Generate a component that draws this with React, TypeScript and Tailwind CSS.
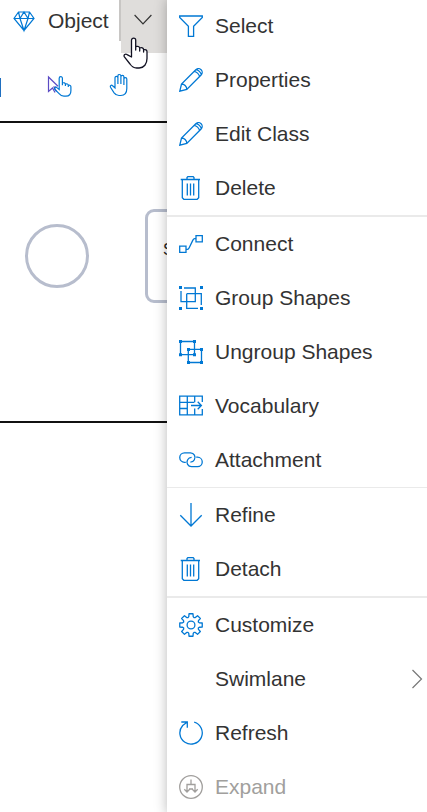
import type { ReactNode } from "react";

type Item = { label: string; icon?: ReactNode; submenu?: boolean; disabled?: boolean };

function Icon({ children, className = "h-6 w-6" }: { children: ReactNode; className?: string }) {
  return (
    <svg viewBox="0 0 24 24" className={`shrink-0 ${className}`} fill="none" stroke="currentColor" strokeWidth="1.3" aria-hidden="true">
      {children}
    </svg>
  );
}

const pencil = (
  <Icon>
    <path d="M.8 23.2 2.5 16 16.8 1.7a3.6 3.6 0 0 1 5.3 5.3L7.8 21.4z M2.5 16c2.700 0 5.300 2.200 5.300 5.400 M15.200 3.300c2.200.3 5 2.800 5.400 5.400 M17.200 1.500c2 .4 4.700 2.900 5.100 5" />
  </Icon>
);

const trash = (
  <Icon>
    <path d="M1.700 3.500h19.300M8 3.500v-2l.8-.8h5.400l.8.8v2M3.300 3.500v18.300l1.500 1.500h13.400l1.500-1.500V3.500M8.300 7.500v12M11.500 7.500v12M14.700 7.500v12" />
  </Icon>
);

const gearPoints = Array.from({ length: 8 }, (_, i) => {
  const at = (deg: number, r: number) => {
    const a = ((i * 45 + deg) * Math.PI) / 180;
    return `${(12 + r * Math.cos(a)).toFixed(2)},${(12 + r * Math.sin(a)).toFixed(2)}`;
  };
  return [at(-15, 8.6), at(-10, 11.4), at(10, 11.4), at(15, 8.6), at(22.5, 7.9)].join(" ");
}).join(" ");

const groups: { rule: string; items: Item[] }[] = [
  {
    rule: "",
    items: [
      { label: "Select", icon: <Icon><path d="M.7 2h22.600v1.400L14.600 12.200v10.100H9.400V12.200L.7 3.400z" /></Icon> },
      { label: "Properties", icon: pencil },
      { label: "Edit Class", icon: pencil },
      { label: "Delete", icon: trash },
    ],
  },
  {
    rule: "border-t-2",
    items: [
      {
        label: "Connect",
        icon: <Icon><path d="M.7 14.200h6.300v6.200H.7zM17 3.700h6.300v6.200H17zM7 17.300h1.500c1 0 1.300-.6 1.700-1.500L14 7.900c.4-.9.800-1.300 1.700-1.300H17" /></Icon>,
      },
      {
        label: "Group Shapes",
        icon: (
          <Icon>
            <path d="M5 2h11.300v13.600H2V5M7.700 7.700h14.600V19M19 22.300H7.700V7.700" />
            <path fill="currentColor" stroke="none" d="M0 0h3v3H0zM21 0h3v3h-3zM0 21h3v3H0zM21 21h3v3h-3z" />
          </Icon>
        ),
      },
      {
        label: "Ungroup Shapes",
        icon: (
          <Icon>
            <path d="M1.500 1.500h14v13.200h-14zM9.300 9.300h13.200v13.200H9.300z" />
            <path fill="currentColor" stroke="none" d="M0 0h3v3H0zM14 0h3v3h-3zM0 13.300h3v3H0zM14 13.300h3v3h-3zM8 8h3v3H8zM21 8h3v3h-3zM8 21h3v3H8zM21 21h3v3h-3z" />
          </Icon>
        ),
      },
      {
        label: "Vocabulary",
        icon: <Icon><path d="M23.300 8V2.200H.7v18.600h22.600V15M8.300 2.200v18.600M.7 8.300h14.600M.7 14.500h7.600M15.700 2.200v6.100M15.700 14.500v6.300M12 11.500h10.300M18.700 7.800l3.700 3.700-3.700 3.700" /></Icon>,
      },
      {
        label: "Attachment",
        icon: (
          <Icon>
            <path d="M6.800 14.300H5.500a4.700 4.700 0 0 1 0-9.500h6a4.600 4.600 0 0 1 3.900 6.900c-.8 1.500-2.300 2.500-4 2.500" />
            <path d="M17.200 9.200h1.300a4.700 4.700 0 0 1 0 9.500h-6a4.600 4.600 0 0 1-3.900-6.900c.8-1.500 2.300-2.500 4-2.500" />
          </Icon>
        ),
      },
    ],
  },
  {
    rule: "border-t",
    items: [
      { label: "Refine", icon: <Icon><path d="M12 0v23M1.300 12.300 12 23l10.700-10.700" /></Icon> },
      { label: "Detach", icon: trash },
    ],
  },
  {
    rule: "border-t-2",
    items: [
      { label: "Customize", icon: <Icon><polygon points={gearPoints} strokeLinejoin="round" /><circle cx="12" cy="12" r="3.900" /></Icon> },
      { label: "Swimlane", submenu: true },
      { label: "Refresh", icon: <Icon><path d="M15.200 1.200A11.200 11.200 0 1 1 3.700 4.500L8.300 1M2.300 1h6v5.700" /></Icon> },
      {
        label: "Expand",
        disabled: true,
        icon: <Icon><circle cx="12" cy="12" r="11.300" /><path d="M12 4.500V9.500M8 17V9.500h8V17M5.300 14.300 8 17l2.700-2.700M13.300 14.300 16 17l2.700-2.700M10 14h4" /></Icon>,
      },
    ],
  },
];

const handPath =
  "M8.500 20V3.200a2.100 2.100 0 0 1 4.200 0V13V9.700c2-.8 3.800-.2 4 1.500V14v-3c2-.8 3.700 0 3.900 1.600V15v-2.200c1.900-.7 3.400.2 3.400 2v6.700c0 5.400-3 9.500-7.800 9.500h-2.500c-3.200 0-5-1.500-6.700-4L1.400 19.800c-1.100-1.800 1-3.600 2.700-2.200z";

function MenuRow({ item }: { item: Item }) {
  return (
    <li role="none">
      <button
        type="button"
        role="menuitem"
        disabled={item.disabled}
        aria-haspopup={item.submenu ? "menu" : undefined}
        className="flex h-[54px] w-full items-center gap-3 pl-3 text-left text-[#0078d4] disabled:text-[#a19f9d]"
      >
        {item.icon ?? <span className="w-6" />}
        <span className={`grow ${item.disabled ? "text-[#a19f9d]" : "text-[#333333]"}`}>{item.label}</span>
        {item.submenu && (
          <svg viewBox="0 0 12 20" className="mr-1 h-5 w-3 text-[#777777]" fill="none" stroke="currentColor" strokeWidth="1.2" aria-hidden="true">
            <path d="M1.500 1 10.500 10l-9 9" />
          </svg>
        )}
      </button>
    </li>
  );
}

export default function App() {
  return (
    <div className="relative min-h-screen overflow-hidden bg-white font-['Liberation_Sans',Arial,sans-serif] text-[21px] leading-6 text-[#333333]">
      <header className="flex h-[53px] items-start">
        <button type="button" className="flex h-[41px] w-[121px] items-center gap-3 border-r-2 border-[#c8c6c4] pl-3">
          <Icon className="h-6 w-6 text-[#0078d4]">
            <path d="M6.500 3h11L22 9.500 12 21.500 2 9.500zM2 9.500h20M6.500 3 8 9.500l4 12 4-12L17.500 3M8 9.500 12 3l4 6.500" strokeWidth="1.200" />
          </Icon>
          <span>Object</span>
        </button>
        <button type="button" aria-label="Object menu" aria-expanded="true" className="flex h-[53px] w-12 items-start bg-[#dfdddb] pt-[14px] pl-[13px]">
          <svg viewBox="0 0 18 12" className="h-3 w-[18px]" fill="none" stroke="currentColor" strokeWidth="1.200" aria-hidden="true">
            <path d="m.6 1 8.400 8.800L17.400 1" />
          </svg>
        </button>
      </header>

      <div className="flex h-17 items-center" role="toolbar" aria-label="Pointer tools">
        <span className="h-[19px] w-px bg-[#1f6fc0]" />
        <button type="button" aria-label="Select and touch" className="ml-[46px] text-[#0078d4]">
          <svg viewBox="0 0 26 24" className="h-6 w-[26px]" fill="none" stroke="currentColor" strokeWidth="1.200" aria-hidden="true">
            <path stroke="#5b4bc4" d="M8 17.500 5.500 13 1.500 16.500V2l9.500 9.200M9.500 12H7l2.500 4.500" />
            <path d="M12.200 14.500V3.200a1.600 1.600 0 0 1 3.200 0v7V8c1.500-.6 2.900 0 3 1.200V11 9c1.500-.5 2.800 0 2.900 1.200V12v-1.700c1.500-.4 2.600.2 2.600 1.500v3.900c0 3.400-2 5.400-5 5.400h-2c-2.200 0-3.600-1-4.800-2.500l-4.300-4.300c-1-1.400.5-2.600 1.700-1.900z" />
          </svg>
        </button>
        <button type="button" aria-label="Pan" className="mb-1 ml-9 text-[#0078d4]">
          <svg viewBox="0 0 22 24" className="h-6 w-[22px]" fill="none" stroke="currentColor" strokeWidth="1.200" aria-hidden="true">
            <path d="M6 15V4.800c0-1.900 2.900-1.900 2.900 0V11 2.900c0-1.900 3-1.900 3 0V11 3.700c0-1.900 3-1.900 3 0V12 6c0-1.800 2.900-1.800 2.900 0v9.500c0 4.300-2.300 7-6 7H10c-2.300 0-3.700-1-4.900-2.700L1.500 14.300c-.8-1.700 1-2.700 2.100-1.500z" />
          </svg>
        </button>
      </div>

      <main className="relative h-[302px] border-t-2 border-b-2 border-t-[#111111] border-b-[#111111]">
        <div className="absolute top-[101px] left-[25px] h-16 w-16 rounded-full border-3 border-[#b7bdcd]" />
        <div className="absolute top-[86px] left-[145px] flex h-[94px] w-[150px] items-start rounded-[9px] border-3 border-[#b7bdcd] pt-[26px] pl-[15px] text-base text-[#222222]">
          <span>S</span>
        </div>
      </main>

      <svg viewBox="0 0 26 33" className="absolute top-[37px] left-[123px] h-[33px] w-[26px]" fill="white" stroke="#111122" strokeWidth="1.300" strokeLinejoin="round" aria-hidden="true">
        <path d={handPath} />
      </svg>

      <nav aria-label="Object" className="absolute -top-px right-0 left-[167px] min-h-[815px] bg-white shadow-[0_0_12px_rgba(0,0,0,0.28)]">
        {groups.map((group, i) => (
          <ul key={i} role="menu" className={`border-[#eaeaea] ${group.rule}`}>
            {group.items.map((item) => (
              <MenuRow key={item.label} item={item} />
            ))}
          </ul>
        ))}
      </nav>
    </div>
  );
}
